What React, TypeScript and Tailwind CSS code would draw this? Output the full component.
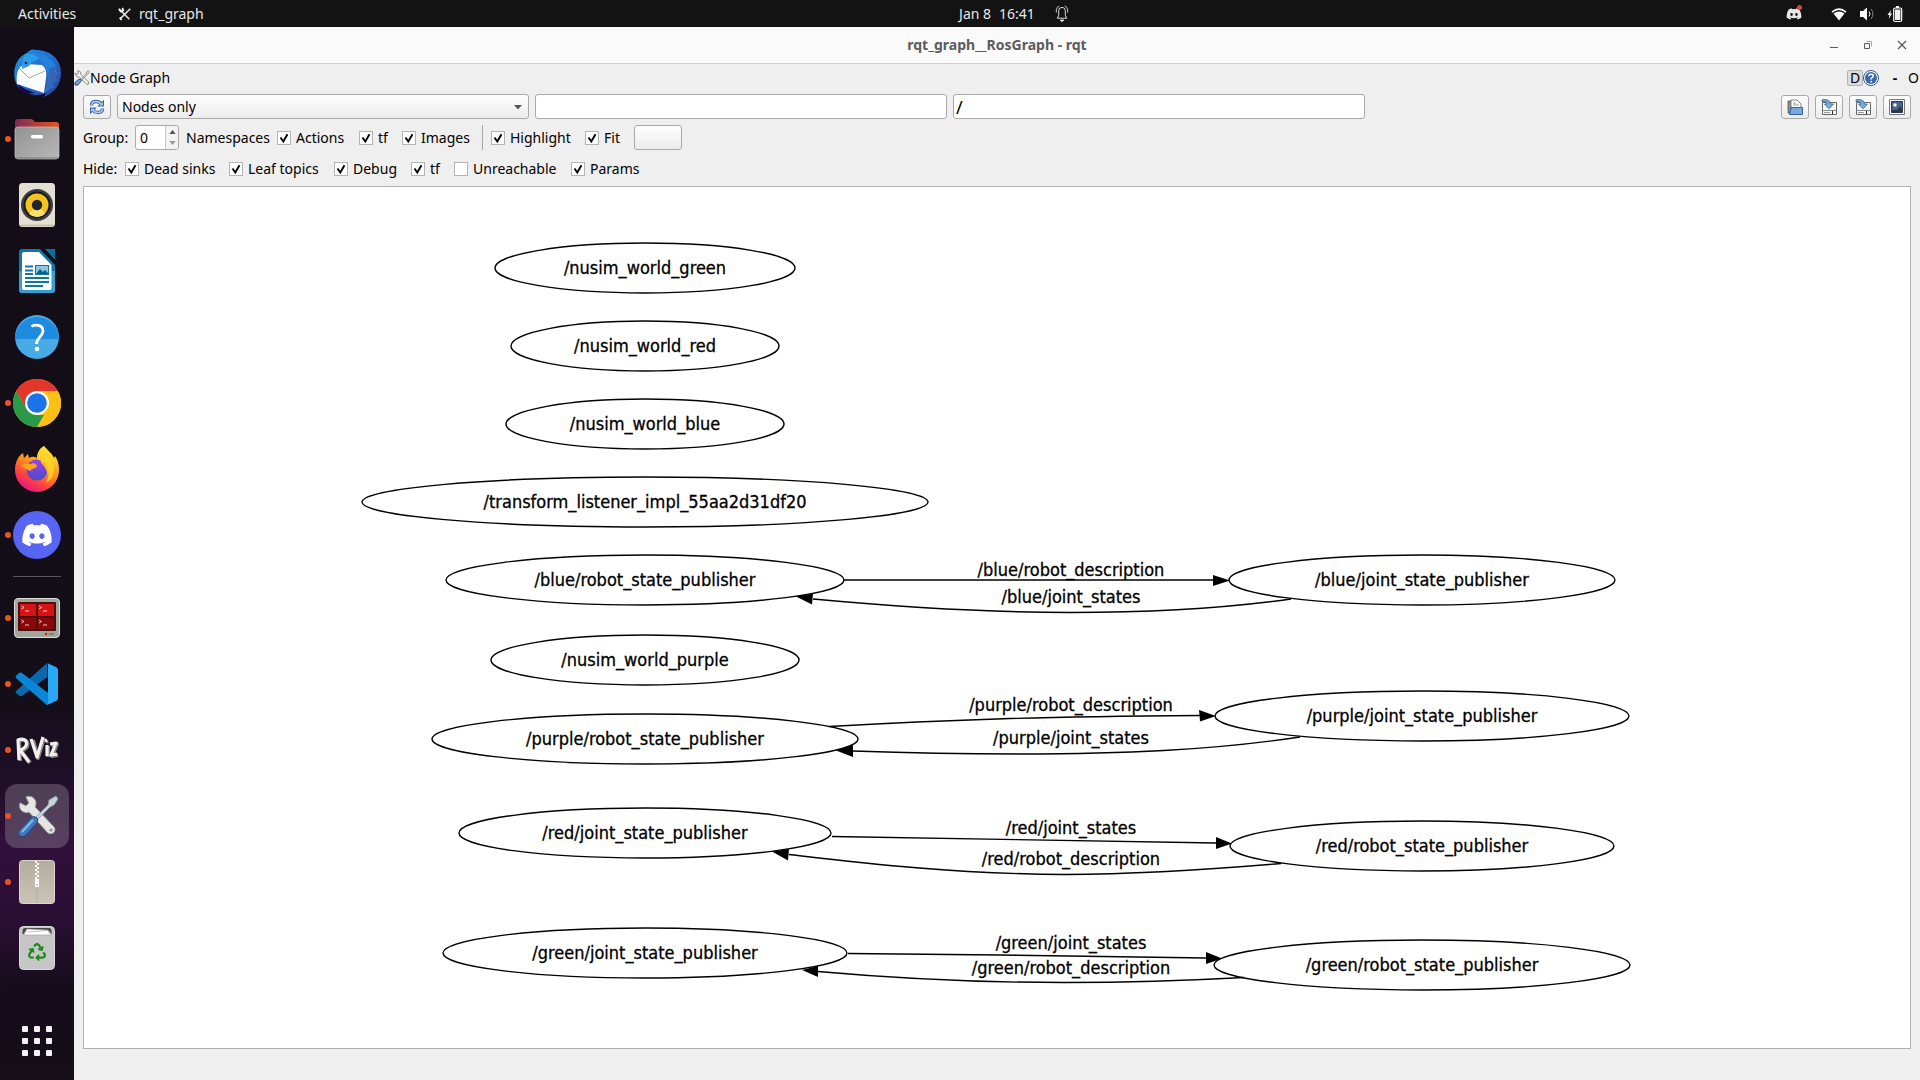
import { useState } from "react";
import type { ReactNode } from "react";
import { FaDiscord, FaRecycle } from "react-icons/fa";

/* ---------- dock icons ---------- */

function Thunderbird() {
  return (
    <svg viewBox="0 0 48 48" className="size-12" aria-hidden="true">
      <defs>
        <linearGradient id="tb" x1="0" y1="0" x2="1" y2="1">
          <stop offset="0" stopColor="#2a8fe0" />
          <stop offset="0.5" stopColor="#1f6fd0" />
          <stop offset="1" stopColor="#2b3f9e" />
        </linearGradient>
      </defs>
      <path d="M15 3C17 0 21 0 23 1C37 1 48 10 48 24C48 36 41 44 31 48L33 44C24 48 10 46 4 36C-2 25 2 10 12 5Z" fill="url(#tb)" />
      <path d="M4 33C8 39 15 41 22 44L13 45C8 42 5 38 4 33Z" fill="#1b0a4a" />
      <path d="M7 18L12 15L29 16C33 19 34 24 33 29L31 44L4 35C3 28 4 22 7 18Z" fill="#fafafa" />
      <path d="M6 19L16 29L32 22" fill="none" stroke="#a8a8a8" strokeWidth="1" />
      <path d="M12 5C19 4 26 6 30 10C25 9 19 12 16 17L9 20C9 14 10 8 12 5Z" fill="#2c9be8" />
      <path d="M15 4C22 5 28 9 32 17C37 25 35 38 31 44C40 38 46 27 42 16C37 7 26 2 15 4Z" fill="#2481dc" />
      <path d="M36 20L45 16L41 23L47 23L42 29L46 31L39 35L42 38L34 41Z" fill="#3565b5" />
      <circle cx="13" cy="14" r="1.3" fill="#10213f" />
    </svg>
  );
}

function Files() {
  return (
    <svg viewBox="0 0 48 48" className="size-12" aria-hidden="true">
      <defs>
        <linearGradient id="fb" x1="0" y1="0" x2="1" y2="0">
          <stop offset="0" stopColor="#7b2a52" />
          <stop offset="1" stopColor="#e95420" />
        </linearGradient>
        <linearGradient id="ff" x1="0" y1="0" x2="1" y2="1">
          <stop offset="0" stopColor="#929292" />
          <stop offset="1" stopColor="#b8b8b8" />
        </linearGradient>
      </defs>
      <path d="M2 16V7Q2 4 5 4H18Q20 4 22 7H43Q46 7 46 10V18H2Z" fill="url(#fb)" />
      <rect x="2" y="12" width="44" height="32" rx="3" fill="url(#ff)" stroke="#c4c4c4" strokeWidth="0.7" />
      <path d="M3 43H45" stroke="#777" strokeWidth="1" />
      <rect x="18" y="20" width="12" height="3.5" rx="1.4" fill="#fff" />
    </svg>
  );
}

function Rhythmbox() {
  return (
    <svg viewBox="0 0 48 48" className="size-12" aria-hidden="true">
      <rect x="6" y="2" width="36" height="44" rx="3.5" fill="#e4dfd3" />
      <path d="M7 44.5H41" stroke="#bdb7aa" strokeWidth="1.5" />
      <circle cx="24" cy="24" r="16" fill="#3b3f44" />
      <circle cx="24" cy="24" r="13.5" fill="#17181a" />
      <circle cx="24" cy="24" r="11.5" fill="#f3c321" />
      <path d="M24 24L16 33A12 12 0 0 0 32 33Z" fill="#ffe06a" />
      <circle cx="24" cy="24" r="5.2" fill="#222326" />
    </svg>
  );
}

function Writer() {
  return (
    <svg viewBox="0 0 48 48" className="size-12" aria-hidden="true">
      <path d="M9 2H27L42 18V43Q42 46 39 46H9Q6 46 6 43V5Q6 2 9 2Z" fill="#0d77aa" />
      <path d="M6 24H42V43Q42 46 39 46H9Q6 46 6 43Z" fill="#35a0d0" />
      <path d="M11 5H26L38.500 18V41Q38.500 43 36.500 43H11Q9 43 9 41V7Q9 5 11 5Z" fill="#fff" />
      <path d="M32 2H42V13Z" fill="#0d6d9e" />
      <g stroke="#0d77aa" strokeWidth="1.8">
        <path d="M12 19.500H20M12 23.500H20M12 27H20M12 31H36M12 35H36M12 39H30" />
      </g>
      <rect x="22.500" y="18.500" width="13" height="9" fill="#8cc6e6" stroke="#0d77aa" />
      <path d="M23 27L27 22L30 25L32 23L35 26V27Z" fill="#0d5f8c" />
    </svg>
  );
}

function Help() {
  return (
    <svg viewBox="0 0 48 48" className="size-12" aria-hidden="true">
      <circle cx="24" cy="24" r="22" fill="#48abe6" />
      <path d="M2 26A22 22 0 1 1 46 26Z" fill="#1f8be0" />
      <path d="M18.500 13.500C21 11.500 30 11 30 18C30 24 23.500 24 23.500 31" fill="none" stroke="#fff" strokeWidth="2.800" />
      <circle cx="24" cy="36" r="2.300" fill="#fff" />
    </svg>
  );
}

function Chrome() {
  return (
    <svg viewBox="0 0 48 48" className="size-12" aria-hidden="true">
      <circle cx="24" cy="24" r="24" fill="#fcc014" />
      <path d="M24 24H13.600L3.200 12A24 24 0 0 1 44.800 12Z" fill="#e3372c" />
      <path d="M24 12H44.800A24 24 0 0 0 3.200 12L13.600 30Z" fill="#e3372c" />
      <path d="M3.200 12L13.600 30L24 36H34.400L24 48A24 24 0 0 1 3.200 12Z" fill="#2b9a48" />
      <path d="M34.400 30L24 48A24 24 0 0 0 44.800 12H24Z" fill="#fcc014" />
      <circle cx="24" cy="24" r="12" fill="#fff" />
      <circle cx="24" cy="24" r="9.800" fill="#1a73e8" />
    </svg>
  );
}

function Firefox() {
  return (
    <svg viewBox="0 0 48 48" className="size-12" aria-hidden="true">
      <defs>
        <linearGradient id="fx" x1="0.800" y1="0.100" x2="0.300" y2="1">
          <stop offset="0" stopColor="#ffe226" />
          <stop offset="0.450" stopColor="#ff8a1c" />
          <stop offset="0.750" stopColor="#ff3b47" />
          <stop offset="1" stopColor="#e31587" />
        </linearGradient>
        <radialGradient id="fg" cx="0.500" cy="0.200" r="0.800">
          <stop offset="0" stopColor="#9a3df0" />
          <stop offset="1" stopColor="#4a4fc0" />
        </radialGradient>
      </defs>
      <path d="M31 1C34 5 39 8 41 13L42 11C45 15 46 20 46 25A22 22 0 0 1 2 25C2 18 5 11 10 8L11 13L15 9L16 13C19 11 22 12 24 13C24 8 27 3 31 1Z" fill="url(#fx)" />
      <circle cx="24" cy="25" r="10.500" fill="url(#fg)" />
      <path d="M8 20C12 18 16 19 18 19C21 17 24 20 24 21C24 23 19 23 17 26C14 24 10 23 8 20Z" fill="#ffa21c" />
      <path d="M28 15C35 17 37 24 35 30C34 26 31 20 28 18Z" fill="#ffb21e" />
      <path d="M31 1C34 5 43 11 41 24C41 32 37 36 33 38C37 30 36 22 32 18C28 16 24 15 24 13C24 8 27 3 31 1Z" fill="#ffd92e" opacity="0.750" />
    </svg>
  );
}

function Discord() {
  return (
    <span className="grid size-12 place-items-center rounded-full bg-[#5865f2]">
      <FaDiscord className="size-8 text-white" aria-hidden="true" />
    </span>
  );
}

function Terminator() {
  return (
    <svg viewBox="0 0 48 48" className="size-12" aria-hidden="true">
      <rect x="1.500" y="4.500" width="45" height="39" rx="3.500" fill="#a2a69c" stroke="#dcdeda" />
      <rect x="5" y="8" width="38" height="29" rx="1" fill="#4d1010" />
      <path d="M7 10H23V22H7ZM25 10H41V22H25Z" fill="#d61414" />
      <path d="M7 24H23V35H7ZM25 24H41V35H25Z" fill="#8a0808" />
      <g fill="none" stroke="#f5c9c9" strokeWidth="1">
        <path d="M8.500 12L11 13.500L8.500 15M12 17H16M26 12L28.500 13.500L26 15M30 17H34M8.500 26L11 27.500L8.500 29M12 31H16M26 26L28.500 27.500L26 29M30 31H34" />
      </g>
      <circle cx="33" cy="40" r="1.200" fill="#e11" />
      <rect x="36" y="39" width="5" height="2" fill="#7d8178" />
    </svg>
  );
}

function VsCode() {
  return (
    <svg viewBox="0 0 48 48" className="size-12" aria-hidden="true">
      <path d="M3 31L34 3V17L9 36Q7 36.500 6 35.500L3 33Q2 32 3 31Z" fill="#0a68ad" />
      <path d="M3 16L6 13Q7.500 12 9 13L35 33V45L33 44.500L3 18Q2 17 3 16Z" fill="#0a86d8" />
      <path d="M34 3L43 7Q45 8 45 10V38Q45 40 43 41L34 45Q35 44.500 35 43V5Q35 3.500 34 3Z" fill="#2aa8f5" />
    </svg>
  );
}

function RViz() {
  return (
    <svg viewBox="0 0 48 48" className="size-12" aria-hidden="true">
      <g fill="none" strokeLinejoin="round">
        <path d="M7 35L6 15C16 11 18 22 8 25L17 37M20 14L25 32L31 12M35 20V31M33 16L35 15M38 19L44 18L39 30L45 29" stroke="#85827e" strokeWidth="4" />
        <path d="M6 34L5 14C15 10 17 21 7 24L16 36M18 13L24 31L30 11M34 19V30M32 15L34 14M37 18L43 17L38 29L44 28" stroke="#f2f0ee" strokeWidth="3.200" />
      </g>
    </svg>
  );
}

function Tools() {
  return (
    <svg viewBox="0 0 48 48" className="size-12" aria-hidden="true">
      <path d="M7 11L13 14L16 11L13 5C18 3 23 6 23 12L22 15L41 35C44 40 39 43 35 41L16 20C11 22 5 18 7 11Z" fill="#e5e6e3" stroke="#a7a9a5" strokeWidth="1" />
      <circle cx="38" cy="38" r="1.500" fill="#8c8e8a" />
      <path d="M22 26L35 13L36 8L43 4L45 7L41 13L37 15L24 28Z" fill="#c9d3da" stroke="#8797a2" strokeWidth="0.800" />
      <path d="M6 39L18 26Q21 23 24 26Q26 29 23 32L13 43Q10 46 7 44Q4 42 6 39Z" fill="#3f78bd" stroke="#1d4a86" strokeWidth="1" />
      <path d="M9 40L20 28" stroke="#8db8e8" strokeWidth="2" />
    </svg>
  );
}

function SmallTools() {
  return (
    <svg viewBox="0 0 16 16" className="size-4" aria-hidden="true">
      <path d="M1 3L3 4.500L4.500 3.500L3.500 1Q7 0.500 7 4.500L14.500 12Q15.500 14.500 12.800 14.500L5.500 7Q1.500 7.500 1 3Z" fill="#f4f4f2" stroke="#858783" strokeWidth="1" />
      <path d="M7 9.500L12 4L12.500 2L14.500 0.800L15.500 2L14 4L12.500 4.800L8 10Z" fill="#dfe2e4" stroke="#858783" strokeWidth="0.800" />
      <path d="M1 12.500L4.500 9.500Q6.500 8.500 7.500 10.500L4 14.800Q1.500 16 0.800 14.500Z" fill="#7ba3d8" stroke="#1f437e" strokeWidth="1" />
    </svg>
  );
}

function Archive() {
  return (
    <svg viewBox="0 0 48 48" className="size-12" aria-hidden="true">
      <defs>
        <linearGradient id="ar" x1="0" y1="0" x2="0" y2="1">
          <stop offset="0" stopColor="#b4ad9e" />
          <stop offset="1" stopColor="#cac4b8" />
        </linearGradient>
      </defs>
      <rect x="6.500" y="2.500" width="35" height="43" rx="3" fill="url(#ar)" stroke="#dcd8cd" />
      <path d="M24 30V45" stroke="#a9a497" strokeWidth="0.600" />
      <path d="M23 3V22" stroke="#fff" strokeWidth="2" strokeDasharray="2 2" />
      <path d="M25 5V22" stroke="#fff" strokeWidth="2" strokeDasharray="2 2" />
      <rect x="22" y="21" width="4" height="8" rx="0.800" fill="#fff" />
      <rect x="23.300" y="26" width="1.500" height="1.500" fill="#aaa" />
    </svg>
  );
}

function Trash() {
  return (
    <span className="grid size-12 place-items-center">
      <svg viewBox="0 0 48 48" className="col-start-1 row-start-1 size-12" aria-hidden="true">
        <rect x="6.500" y="2.500" width="35" height="43" rx="4" fill="#c6c6c6" stroke="#d8d8d8" />
        <path d="M9.500 10V7Q9.500 4 12 4H36Q38.500 4 38.500 7V10Z" fill="#4a4a4a" />
        <path d="M11 10L14 5L35 6L38 10V11H11Z" fill="#fff" stroke="#9c9c9c" strokeWidth="0.600" />
        <path d="M14 8L35 6.500L37 10" fill="none" stroke="#999" strokeWidth="0.600" />
      </svg>
      <FaRecycle className="col-start-1 row-start-1 mt-2 size-[18px] text-[#1d8a1d]" aria-hidden="true" />
    </span>
  );
}

function DockItem({ label, running, active, children }: { label: string; running?: boolean; active?: boolean; children: ReactNode }) {
  return (
    <button
      type="button"
      aria-label={label}
      className={`relative mx-[5px] my-px grid h-16 w-16 shrink-0 place-items-center rounded-xl ${active ? "bg-white/20" : ""}`}
    >
      {children}
      {running && <span className="absolute left-0 top-1/2 size-[6px] -translate-y-1/2 rounded-full bg-[#e95420]" />}
    </button>
  );
}

function Dock() {
  return (
    <nav aria-label="Dock" className="flex w-[74px] shrink-0 flex-col bg-[linear-gradient(178deg,#130d17_0%,#140e18_64%,#1f0f28_71%,#31103b_78%,#2a0e33_85%,#160d1b_91%,#150f19_100%)] pt-[13px]">
      <DockItem label="Thunderbird Mail"><Thunderbird /></DockItem>
      <DockItem label="Files" running><Files /></DockItem>
      <DockItem label="Rhythmbox"><Rhythmbox /></DockItem>
      <DockItem label="LibreOffice Writer"><Writer /></DockItem>
      <DockItem label="Help"><Help /></DockItem>
      <DockItem label="Google Chrome" running><Chrome /></DockItem>
      <DockItem label="Firefox"><Firefox /></DockItem>
      <DockItem label="Discord" running><Discord /></DockItem>
      <div className="mx-[13px] my-2 h-px shrink-0 bg-[#5a555d]" />
      <DockItem label="Terminator" running><Terminator /></DockItem>
      <DockItem label="Visual Studio Code" running><VsCode /></DockItem>
      <DockItem label="RViz" running><RViz /></DockItem>
      <DockItem label="rqt_graph" running active><Tools /></DockItem>
      <DockItem label="Archive Manager" running><Archive /></DockItem>
      <DockItem label="Trash"><Trash /></DockItem>
      <button type="button" aria-label="Show Applications" className="mx-auto mb-6 mt-auto grid grid-cols-3 gap-[6px]">
        {Array.from({ length: 9 }, (_, i) => (
          <span key={i} className="size-[6px] rounded-[1px] bg-[#f2f2f2]" />
        ))}
      </button>
    </nav>
  );
}

/* ---------- top bar ---------- */

function TopBar() {
  return (
    <header className="grid h-[27px] shrink-0 grid-cols-[1fr_auto_1fr] items-center bg-[#131313] text-[14px] leading-5 text-[#e8e8e8]">
      <div className="flex items-center">
        <button type="button" className="w-[100px] pl-[18px] text-left">Activities</button>
        <button type="button" className="flex items-center gap-[7px] pl-[18px]">
          <svg viewBox="0 0 16 16" className="size-[14px]" aria-hidden="true">
            <path d="M2 3L13 14M14 2L3 13" stroke="#d8d8d8" strokeWidth="2" />
            <path d="M1 2L3 5L6 4L5 1M2 12L4 15" fill="none" stroke="#f2f2f2" strokeWidth="2" />
          </svg>
          rqt_graph
        </button>
      </div>
      <button type="button" className="flex items-center gap-5 pl-[108px]">
        <time className="flex gap-2"><span>Jan 8</span><span>16:41</span></time>
        <svg viewBox="0 0 14 18" className="h-[17px] w-[14px]" fill="none" stroke="#e8e8e8" aria-hidden="true">
          <path d="M2 14H12L10.500 11V6Q10.500 2.500 7 2.500T3.500 6V11Z" />
          <path d="M1 8V5Q1.500 2 4 1M13 8V5Q12.500 2 10 1" strokeWidth="0.900" />
          <path d="M5 16H9L7 17.500Z" fill="#e8e8e8" />
        </svg>
      </button>
      <div className="flex items-center justify-end pr-[17px]">
        <button type="button" aria-label="Discord" className="relative mr-[29px]">
          <FaDiscord className="size-4 text-[#e6e6e6]" />
          <span className="absolute -top-px right-0 size-[5px] rounded-full bg-[#ed3b3b]" />
        </button>
        <button type="button" aria-label="System menu" className="flex items-center gap-3">
          <svg viewBox="0 0 16 16" className="size-4" aria-hidden="true">
            <path d="M0.500 5.500Q8 -1 15.500 5.500L14.500 6.700Q8 1.500 1.500 6.700Z" fill="#fff" />
            <path d="M2.500 7.500Q8 3.500 13.500 7.500L8 14.500Z" fill="#fff" />
          </svg>
          <svg viewBox="0 0 16 16" className="size-4" aria-hidden="true">
            <path d="M1 5H4L8 1.500V14.500L4 11H1Z" fill="#fff" />
            <path d="M10 5.500Q12 8 10 10.500" fill="none" stroke="#fff" />
            <path d="M12 3Q16 8 12 13" fill="none" stroke="#888" />
          </svg>
          <svg viewBox="0 0 16 18" className="h-[18px] w-4" aria-hidden="true">
            <path d="M4 5L0.500 10H2.500L1.800 14L5 8.500H3.200Z" fill="#fff" />
            <path d="M9 1H12V3H9Z" fill="#fff" />
            <rect x="6.700" y="3" width="8" height="13.500" rx="1.500" fill="none" stroke="#fff" strokeWidth="1.200" />
            <rect x="8" y="4.500" width="5.400" height="10.500" fill="#eee" />
          </svg>
        </button>
      </div>
    </header>
  );
}

/* ---------- form controls ---------- */

const raised = "rounded-[3px] border border-[#a9a9a9] bg-gradient-to-b from-[#fefefe] to-[#ececec]";

function Check({ id, label, on = true, className = "" }: { id: string; label: string; on?: boolean; className?: string }) {
  return (
    <label htmlFor={id} className={`flex shrink-0 items-center gap-[5px] whitespace-nowrap ${className}`}>
      <span className="grid size-[14px] shrink-0">
        <input id={id} type="checkbox" defaultChecked={on} className="peer col-start-1 row-start-1 size-[14px] appearance-none border border-[#b4b4b4] bg-white" />
        <svg viewBox="0 0 14 14" className="pointer-events-none col-start-1 row-start-1 hidden size-[14px] peer-checked:block" aria-hidden="true">
          <path d="M3.500 6.500L6.300 10.500L10.500 3.200" fill="none" stroke="#000" strokeWidth="1.900" />
        </svg>
      </span>
      {label}
    </label>
  );
}

function ToolButton({ label, children }: { label: string; children: ReactNode }) {
  return (
    <button type="button" aria-label={label} className={`grid h-6 w-7 shrink-0 place-items-center ${raised}`}>
      <svg viewBox="0 0 16 16" className="size-4" aria-hidden="true">{children}</svg>
    </button>
  );
}

function SaveGlyph() {
  return (
    <>
      <path d="M1.500 3.500H15.500V15.500H1.500Z" fill="#f8f8f6" stroke="#666" />
      <path d="M1.500 11.500H15.500" stroke="#888" />
      <path d="M3 13.500H9" stroke="#999" />
      <path d="M11.500 12V15" stroke="#222" />
      <path d="M1 0.800Q9 -0.500 9.500 5H12.500L8 9.800L3.500 5H6Q6 2 1 2.500Z" fill="#7eacd6" stroke="#2b6396" strokeWidth="0.800" />
    </>
  );
}

/* ---------- graph ---------- */

type GraphNode = { name: string; x: number; y: number; rx: number };

const nodes: GraphNode[] = [
  { name: "/nusim_world_green", x: 645, y: 268, rx: 150 },
  { name: "/nusim_world_red", x: 645, y: 346, rx: 134 },
  { name: "/nusim_world_blue", x: 645, y: 424, rx: 139 },
  { name: "/transform_listener_impl_55aa2d31df20", x: 645, y: 502, rx: 283 },
  { name: "/blue/robot_state_publisher", x: 645, y: 580, rx: 199 },
  { name: "/nusim_world_purple", x: 645, y: 660, rx: 154 },
  { name: "/purple/robot_state_publisher", x: 645, y: 739, rx: 213 },
  { name: "/red/joint_state_publisher", x: 645, y: 833, rx: 186 },
  { name: "/green/joint_state_publisher", x: 645, y: 953, rx: 202 },
  { name: "/blue/joint_state_publisher", x: 1422, y: 580, rx: 193 },
  { name: "/purple/joint_state_publisher", x: 1422, y: 716, rx: 207 },
  { name: "/red/robot_state_publisher", x: 1422, y: 846, rx: 192 },
  { name: "/green/robot_state_publisher", x: 1422, y: 965, rx: 208 },
];

const edges = [
  { name: "/blue/robot_description", y: 570, path: "M844 580H1214", head: "1213,575 1213,586 1230,580.5" },
  { name: "/blue/joint_states", y: 597, path: "M813 599C900 607 990 612.500 1070 612.500C1150 612.500 1220 609 1291 599", head: "813,593.5 812,604.5 796,596.5" },
  { name: "/purple/robot_description", y: 705, path: "M829 726.500C900 722.500 950 720.500 1010 718.500C1080 716.500 1140 716 1200 715.500", head: "1199,710 1200,721.5 1216,716" },
  { name: "/purple/joint_states", y: 738, path: "M853 751C910 753 965 754 1020 754C1120 754 1210 750.500 1300 737", head: "853,745 853,757 836,750.5" },
  { name: "/red/joint_states", y: 828, path: "M832 836.500L1216 843", head: "1216,837 1216,849 1232,843.5" },
  { name: "/red/robot_description", y: 859, path: "M789 854.500C850 861.500 950 874 1065 874.500C1140 874 1210 869.500 1281 863.500", head: "789,849 788,860.5 772,851.5" },
  { name: "/green/joint_states", y: 943, path: "M848 953.500L1000 955L1206 958", head: "1206,952 1206,964 1222,958.5" },
  { name: "/green/robot_description", y: 968, path: "M818 971.500C880 977 960 982.500 1065 982.500C1130 982.500 1190 980.500 1244 977.500", head: "818,966 818,977 802,970" },
];

function Graph() {
  return (
    <main className="mx-[9px] mb-[31px] min-h-0 flex-1 border border-[#b0b0b0] bg-white">
      <svg viewBox="84 187 1826 861" className="h-full w-full" role="img" aria-label="ROS node graph">
        <g fill="none" stroke="#000" strokeWidth="1.400">
          {nodes.map((n) => (
            <ellipse key={n.name} cx={n.x} cy={n.y} rx={n.rx} ry={25} />
          ))}
          {edges.map((e) => (
            <path key={e.name} d={e.path} />
          ))}
        </g>
        {edges.map((e) => (
          <polygon key={e.name} points={e.head} />
        ))}
        <g className="font-['DejaVu_Sans_Condensed','DejaVu_Sans',sans-serif] text-[18px]" textAnchor="middle">
          {nodes.map((n) => (
            <text key={n.name} x={n.x} y={n.y + 6} stroke="#000" strokeWidth="0.300">{n.name}</text>
          ))}
          {edges.map((e) => (
            <text key={e.name} x={1071} y={e.y + 6} stroke="#000" strokeWidth="0.300">{e.name}</text>
          ))}
        </g>
      </svg>
    </main>
  );
}

/* ---------- window ---------- */

function TitleBar() {
  return (
    <div className="grid h-[37px] shrink-0 grid-cols-[1fr_auto_1fr] items-center border-b border-[#cfcfcf] bg-[#fafafa]">
      <span />
      <h1 className="text-[14px] font-bold leading-5 text-[#5c5c5c]">rqt_graph__RosGraph - rqt</h1>
      <div className="flex justify-end gap-[18px] pr-[10px] text-[#5c5c5c]">
        <button type="button" aria-label="Minimize">
          <svg viewBox="0 0 16 16" className="size-4" stroke="currentColor" aria-hidden="true"><path d="M4 10.500H12" /></svg>
        </button>
        <button type="button" aria-label="Restore">
          <svg viewBox="0 0 16 16" className="size-4" fill="none" stroke="currentColor" aria-hidden="true">
            <path d="M4.500 6.500H9.500V11.500H4.500Z" />
            <path d="M6.500 4.500H11.500V9.500" stroke="#aaa" />
          </svg>
        </button>
        <button type="button" aria-label="Close">
          <svg viewBox="0 0 16 16" className="size-4" stroke="currentColor" strokeWidth="1.300" aria-hidden="true"><path d="M4 4L12 12M12 4L4 12" /></svg>
        </button>
      </div>
    </div>
  );
}

export default function App() {
  const [ns, setNs] = useState("/");
  return (
    <div className="flex h-screen flex-col overflow-hidden font-['Noto_Sans','Open_Sans',sans-serif]">
      <TopBar />
      <div className="flex min-h-0 flex-1">
        <Dock />
        <div className="flex min-w-0 flex-1 flex-col bg-[#efefef] text-[14px] leading-5 text-black">
          <TitleBar />
          <div className="flex h-[27px] shrink-0 items-center">
            <SmallTools />
            <h2>Node Graph</h2>
            <div className="ml-auto flex items-center pr-px">
              <button type="button" className="h-4 w-4 rounded-[2px] border border-[#b3b3b3] bg-[#dcdcdc] leading-[14px]">D</button>
              <button type="button" aria-label="Help">
                <svg viewBox="0 0 16 16" className="size-4" aria-hidden="true">
                  <circle cx="8" cy="8" r="7.500" fill="#fff" stroke="#34588f" />
                  <circle cx="8" cy="8" r="6" fill="#3d68a8" />
                  <path d="M5.800 6.300Q6 4.300 8 4.300Q10.300 4.300 10.300 6Q10.300 7 8.200 8.300V9.500" fill="none" stroke="#fff" strokeWidth="1.500" />
                  <circle cx="8.200" cy="11.700" r="0.900" fill="#fff" />
                </svg>
              </button>
              <button type="button" aria-label="Minimize panel" className="ml-2 w-4 font-bold">-</button>
              <button type="button" aria-label="Detach panel" className="w-4 text-right">O</button>
            </div>
          </div>

          <div className="grid shrink-0 grid-cols-[auto_1fr_1fr_1fr_0.98fr_auto_auto_auto_auto] items-center gap-[6px] px-[9px] pt-[3px]">
            <ToolButton label="Refresh ROS graph">
              <g fill="none" stroke="#3465a4" strokeWidth="3.400">
                <path d="M2.500 6.500Q2.500 2.500 7 2.500Q10.500 2.500 12 5" />
                <path d="M13.500 9.500Q13.500 13.500 9 13.500Q5.500 13.500 4 11" />
              </g>
              <path d="M15 0.800V7.500H8.300ZM1 15.200V8.500H7.700Z" fill="#3465a4" />
              <path d="M14 3V6.500H10.500ZM2 13V9.500H5.500Z" fill="#a9c6e8" />
              <g fill="none" stroke="#b4cdea" strokeWidth="1.700">
                <path d="M2.500 6Q3 2.500 7 2.500Q10.500 2.500 12.500 5.500" />
                <path d="M13.500 10Q13 13.500 9 13.500Q5.500 13.500 3.500 10.500" />
              </g>
            </ToolButton>
            <div className="relative min-w-0">
              <select aria-label="Graph type" className={`block h-[25px] w-full appearance-none pl-1 text-[14px] ${raised}`}>
                <option>Nodes only</option>
              </select>
              <svg viewBox="0 0 8 5" className="pointer-events-none absolute right-[7px] top-[11px] h-[5px] w-2" aria-hidden="true">
                <path d="M0 0H8L4 4.500Z" fill="#555" />
              </svg>
            </div>
            <input type="text" aria-label="Node filter" className="h-[25px] w-full min-w-0 rounded-[3px] border border-[#a9a9a9] bg-white px-[2px]" />
            <input type="text" aria-label="Topic filter" value={ns} onChange={(e) => setNs(e.target.value)} className="h-[25px] w-full min-w-0 rounded-[3px] border border-[#a9a9a9] bg-white px-[2px] text-[18px]" />
            <span />
            <ToolButton label="Load from file">
              <path d="M1 2H6V14H1Z" fill="#8f918e" stroke="#555" strokeWidth="0.800" />
              <path d="M4 1H10L14 5V10H4Z" fill="#fff" stroke="#666" strokeWidth="0.800" />
              <path d="M6 4H9M6 6H12" stroke="#999" />
              <path d="M4 8.500H15.500V15.500H2.500Z" fill="#78a8dc" stroke="#2f62a0" />
            </ToolButton>
            <ToolButton label="Save as DOT"><SaveGlyph /></ToolButton>
            <ToolButton label="Save as SVG"><SaveGlyph /></ToolButton>
            <ToolButton label="Save as image">
              <path d="M0.500 0.500H15.500V15.500H0.500Z" fill="#f6f6f4" stroke="#777" />
              <path d="M2.500 2.500H13.500V13.500H2.500Z" fill="#41649b" stroke="#2b3850" />
              <path d="M3 11H13V13H3Z" fill="#2a3650" />
              <path d="M8 11L11 7L13 10V13H8Z" fill="#33383f" />
              <circle cx="6" cy="6" r="1.800" fill="#fbf3b0" />
            </ToolButton>
          </div>

          <div className="mt-[6px] flex h-[25px] shrink-0 items-center px-[9px]">
            <label htmlFor="group" className="w-[52px]">Group:</label>
            <div className="relative mr-[7px] h-[25px] w-11 rounded-[3px] border border-[#a9a9a9] bg-white">
              <input id="group" type="text" inputMode="numeric" defaultValue="0" className="h-full w-7 bg-transparent pl-1" />
              <div className="absolute inset-y-0 right-0 flex w-[13px] flex-col rounded-r-[3px] border-l border-[#c4c4c4] bg-[#f3f3f3]">
                <button type="button" aria-label="Increase" className="grid flex-1 place-items-center">
                  <svg viewBox="0 0 8 5" className="h-1 w-[7px]"><path d="M0 5H8L4 0Z" fill="#555" /></svg>
                </button>
                <button type="button" aria-label="Decrease" className="grid flex-1 place-items-center">
                  <svg viewBox="0 0 8 5" className="h-1 w-[7px]"><path d="M0 0H8L4 5Z" fill="#999" /></svg>
                </button>
              </div>
            </div>
            <span className="w-[91px]">Namespaces</span>
            <Check id="g-actions" label="Actions" className="w-[82px]" />
            <Check id="g-tf" label="tf" className="w-[43px]" />
            <Check id="g-images" label="Images" className="w-20" />
            <div className="mr-2 h-full w-px bg-[#a5a5a5]" />
            <Check id="g-highlight" label="Highlight" className="w-[94px]" />
            <Check id="g-fit" label="Fit" className="w-[49px]" />
            <button type="button" aria-label="Fit in view" className={`h-[25px] w-12 ${raised}`} />
          </div>

          <div className="mb-[5px] mt-[7px] flex h-[24px] shrink-0 items-center px-[9px]">
            <span className="w-[42px]">Hide:</span>
            <Check id="h-dead" label="Dead sinks" className="w-[104px]" />
            <Check id="h-leaf" label="Leaf topics" className="w-[105px]" />
            <Check id="h-debug" label="Debug" className="w-[77px]" />
            <Check id="h-tf" label="tf" className="w-[43px]" />
            <Check id="h-unreachable" label="Unreachable" on={false} className="w-[117px]" />
            <Check id="h-params" label="Params" />
          </div>

          <Graph />
        </div>
      </div>
    </div>
  );
}
